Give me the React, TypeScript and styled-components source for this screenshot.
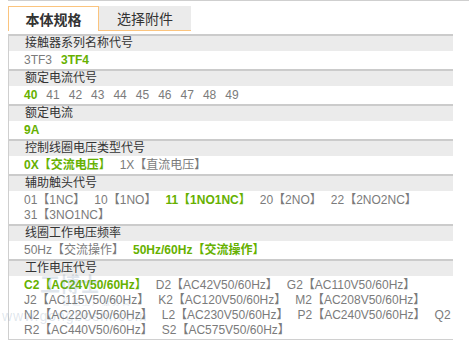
import React from "react";
import styled, { createGlobalStyle } from "styled-components";

const Global = createGlobalStyle`
  html, body { margin: 0; padding: 0; background: #fff; }
  body { font-family: "Liberation Sans", "Noto Sans CJK SC", Arial, sans-serif; }
`;

const Page = styled.div`
  position: relative;
  padding-left: 8px;
  width: 461px;
  height: 341px;
  overflow: hidden;
`;

const TopRule = styled.div`
  border-top: 1px solid #cfcfcf;
  margin-bottom: 5px;
`;

const TabBar = styled.div`
  display: flex;
  height: 25px;
`;

const Tab = styled.div<{ $active?: boolean }>`
  box-sizing: border-box;
  width: ${(p) => (p.$active ? 91 : 92)}px;
  height: 25px;
  display: flex;
  align-items: center;
  justify-content: center;
  font-size: 14px;
  color: #333;
  font-family: "Noto Sans CJK SC", sans-serif;
  font-weight: ${(p) => (p.$active ? 700 : 400)};
  background: ${(p) => (p.$active ? "#fff" : "#ebebeb")};
  border: ${(p) => (p.$active ? "1px solid #fbc47e" : "none")};
  border-bottom: ${(p) => (p.$active ? "none" : "1px solid #fbc47e")};
`;

const Panel = styled.div`
  margin-top: 3px;
  width: 445px;
  box-sizing: border-box;
  border-left: 1px solid #cfcfcf;
  border-bottom: 1px solid #d0d0d0;
`;

const Header = styled.div`
  border-top: 2px solid #cbcbcb;
  background: #ebebeb;
  height: 15px;
  line-height: 15px;
  padding-left: 16px;
  font-size: 12px;
  color: #333;
  font-family: "Liberation Sans", "Noto Sans CJK SC", sans-serif;
`;

const Values = styled.div`
  display: flex;
  flex-wrap: wrap;
  column-gap: 9px;
  padding: 2px 0 1px 15px;
  line-height: 15px;
  font-size: 12px;
`;

const Item = styled.span<{ $on?: boolean }>`
  white-space: nowrap;
  color: ${(p) => (p.$on ? "#66b100" : "#7b7b7b")};
  font-weight: ${(p) => (p.$on ? 700 : 400)};
`;

const Watermark = styled.div`
  position: absolute;
  left: 2px;
  top: 272px;
  display: flex;
  flex-direction: column;
  align-items: flex-start;
  pointer-events: none;
  color: rgba(110, 140, 170, 0.22);
  font-family: "Liberation Sans", "Noto Sans CJK SC", sans-serif;
`;

const WmTitle = styled.div`
  padding-left: 38px;
  font-size: 20px;
  line-height: 24px;
  font-weight: 700;
  font-family: "Noto Sans CJK SC", sans-serif;
`;

const WmSub = styled.div`
  padding-left: 60px;
  font-size: 8px;
  line-height: 12px;
  letter-spacing: 2px;
  font-family: "Noto Sans CJK SC", sans-serif;
`;

const WmUrl = styled.div`
  font-size: 14px;
  line-height: 16px;
  letter-spacing: 1px;
`;

type Opt = { t: string; on?: boolean };

const sections: { title: string; opts: Opt[] }[] = [
  { title: "接触器系列名称代号", opts: [{ t: "3TF3" }, { t: "3TF4", on: true }] },
  {
    title: "额定电流代号",
    opts: ["40", "41", "42", "43", "44", "45", "46", "47", "48", "49"].map((t, i) => ({ t, on: i === 0 })),
  },
  { title: "额定电流", opts: [{ t: "9A", on: true }] },
  {
    title: "控制线圈电压类型代号",
    opts: [{ t: "0X【交流电压】", on: true }, { t: "1X【直流电压】" }],
  },
  {
    title: "辅助触头代号",
    opts: [
      { t: "01【1NC】" },
      { t: "10【1NO】" },
      { t: "11【1NO1NC】", on: true },
      { t: "20【2NO】" },
      { t: "22【2NO2NC】" },
      { t: "31【3NO1NC】" },
    ],
  },
  {
    title: "线圈工作电压频率",
    opts: [{ t: "50Hz【交流操作】" }, { t: "50Hz/60Hz【交流操作】", on: true }],
  },
  {
    title: "工作电压代号",
    opts: [
      { t: "C2【AC24V50/60Hz】", on: true },
      { t: "D2【AC42V50/60Hz】" },
      { t: "G2【AC110V50/60Hz】" },
      { t: "J2【AC115V50/60Hz】" },
      { t: "K2【AC120V50/60Hz】" },
      { t: "M2【AC208V50/60Hz】" },
      { t: "N2【AC220V50/60Hz】" },
      { t: "L2【AC230V50/60Hz】" },
      { t: "P2【AC240V50/60Hz】" },
      { t: "Q2" },
      { t: "R2【AC440V50/60Hz】" },
      { t: "S2【AC575V50/60Hz】" },
    ],
  },
];

export default function App() {
  return (
    <>
      <Global />
      <Page>
        <TopRule />
        <TabBar>
          <Tab $active>本体规格</Tab>
          <Tab>选择附件</Tab>
        </TabBar>
        <Panel>
          {sections.map((s) => (
            <React.Fragment key={s.title}>
              <Header>{s.title}</Header>
              <Values>
                {s.opts.map((o) => (
                  <Item key={o.t} $on={o.on}>
                    {o.t}
                  </Item>
                ))}
              </Values>
            </React.Fragment>
          ))}
        </Panel>
        <Watermark>
          <WmTitle>工博士</WmTitle>
          <WmSub>智能工厂服务商</WmSub>
          <WmUrl>www.gongboshi.com</WmUrl>
        </Watermark>
      </Page>
    </>
  );
}
